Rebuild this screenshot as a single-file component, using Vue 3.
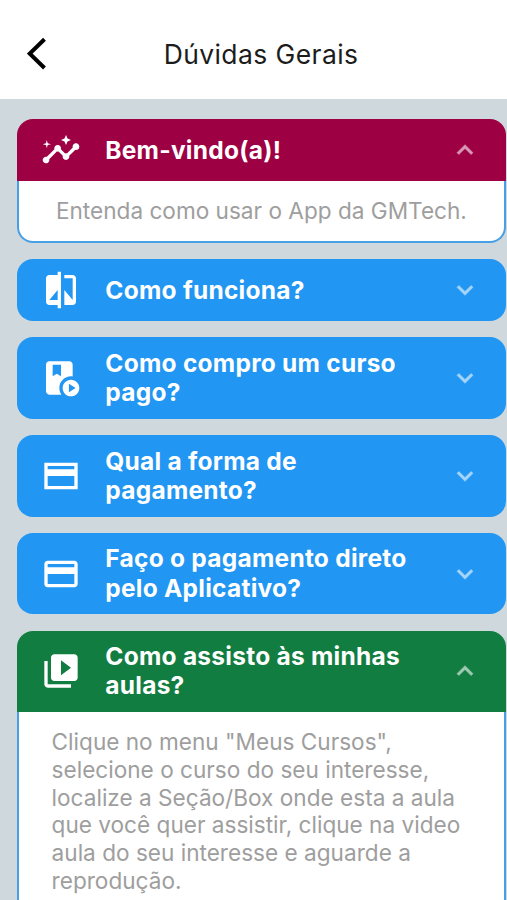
<script setup>
import { ref } from 'vue'

const icons = {
  insights:
    'M21 8c-1.45 0-2.26 1.44-1.93 2.51l-3.55 3.56c-.3-.09-.74-.09-1.04 0l-2.55-2.55C12.27 10.45 11.46 9 10 9c-1.45 0-2.27 1.44-1.93 2.52l-4.56 4.55C2.44 15.74 1 16.55 1 18c0 1.1.9 2 2 2 1.45 0 2.26-1.44 1.93-2.51l4.55-4.56c.3.09.74.09 1.04 0l2.55 2.55C12.73 16.55 13.54 18 15 18c1.45 0 2.27-1.44 1.93-2.52l3.56-3.55C21.56 12.26 23 11.45 23 10c0-1.1-.9-2-2-2zM15 9l.94-2.07L18 6l-2.06-.93L15 3l-.92 2.07L12 6l2.08.93zM3.5 11L4 9l2-.5L4 8l-.5-2L3 8l-2 .5L3 9z',
  compare:
    'M10 3H5c-1.1 0-2 .9-2 2v14c0 1.1.9 2 2 2h5v2h2V1h-2v2zm0 15H5l5-6v6zm9-15h-5v2h5v13l-5-6v9h5c1.1 0 2-.9 2-2V5c0-1.1-.9-2-2-2z',
  lesson:
    'M18 11c.34 0 .67.03 1 .08V4c0-1.1-.9-2-2-2H5c-1.1 0-2 .9-2 2v16c0 1.1.9 2 2 2h7.26C11.47 20.87 11 19.49 11 18c0-3.87 3.13-7 7-7zM7 11V4h5v7L9.5 9.5 7 11zM18 13c-2.76 0-5 2.24-5 5s2.24 5 5 5 5-2.24 5-5-2.24-5-5-5zm-1.25 7.5v-5l4 2.5-4 2.5z',
  cardSharp: 'M22 4H2v16h20V4zm-2 14H4v-6h16v6zm0-10H4V6h16v2z',
  card: 'M20 4H4c-1.11 0-1.99.89-1.99 2L2 18c0 1.11.89 2 2 2h16c1.11 0 2-.89 2-2V6c0-1.11-.89-2-2-2zm0 14H4v-6h16v6zm0-10H4V6h16v2z',
  videos:
    'M4 6H2v14c0 1.1.9 2 2 2h14v-2H4V6zm16-4H8c-1.1 0-2 .9-2 2v12c0 1.1.9 2 2 2h12c1.1 0 2-.9 2-2V4c0-1.1-.9-2-2-2zm-8 12.5v-9l6 4.5-6 4.5z',
}

const items = ref([
  { icon: 'insights', lines: ['Bem-vindo(a)!'], tone: 'crimson', open: true, note: true, body: ['Entenda como usar o App da GMTech.'] },
  { icon: 'compare', lines: ['Como funciona?'], tone: 'blue' },
  { icon: 'lesson', lines: ['Como compro um curso', 'pago?'], tone: 'blue' },
  { icon: 'cardSharp', lines: ['Qual a forma de', 'pagamento?'], tone: 'blue' },
  { icon: 'card', lines: ['Faço o pagamento direto', 'pelo Aplicativo?'], tone: 'blue' },
  {
    icon: 'videos',
    lines: ['Como assisto às minhas', 'aulas?'],
    tone: 'green',
    open: true,
    body: [
      'Clique no menu "Meus Cursos",',
      'selecione o curso do seu interesse,',
      'localize a Seção/Box onde esta a aula',
      'que você quer assistir, clique na video',
      'aula do seu interesse e aguarde a',
      'reprodução.',
    ],
  },
])
</script>

<template>
  <div class="screen">
    <header class="bar">
      <svg class="back" viewBox="0 0 20 34"><path d="M17.5 2.2 2.8 16.6 17.5 31" /></svg>
      <h1 class="title">Dúvidas Gerais</h1>
    </header>
    <main class="list">
      <section v-for="item in items" :key="item.icon" class="panel">
        <button class="head" :class="[item.tone, { open: item.open, tall: item.lines.length > 1 }]">
          <svg class="icon" viewBox="0 0 24 24"><path :d="icons[item.icon]" /></svg>
          <span class="label"><span v-for="l in item.lines" :key="l" class="line">{{ l }}</span></span>
          <svg class="chevron" :class="{ up: item.open }" viewBox="0 0 24 24">
            <path d="M16.59 8.59 12 13.17 7.41 8.59 6 10l6 6 6-6z" />
          </svg>
        </button>
        <div v-if="item.open" class="body" :class="{ note: item.note }">
          <span v-for="l in item.body" :key="l" class="line">{{ l }}</span>
        </div>
      </section>
    </main>
  </div>
</template>

<style>
body {
  margin: 0;
  background: #cfd8dc;
}
</style>

<style scoped>
.screen {
  box-sizing: border-box;
  height: 900px;
  overflow: hidden;
  background: #cfd8dc;
  font-family: Inter, "Liberation Sans", sans-serif;
}
.bar {
  display: grid;
  grid-template-columns: 68px 1fr 53px;
  align-items: center;
  box-sizing: border-box;
  height: 99px;
  padding-top: 8px;
  background: #fff;
}
.back {
  width: 20px;
  height: 34px;
  margin-left: 26.5px;
  fill: none;
  stroke: #000;
  stroke-width: 4;
}
.title {
  margin: 0;
  text-align: center;
  font-size: 26.5px;
  font-weight: 400;
  letter-spacing: 0.4px;
  color: #1c1c1c;
  white-space: nowrap;
}
.list {
  display: flex;
  flex-direction: column;
  gap: 16.2px;
  padding: 20.4px 1.5px 0 17.3px;
}
.head {
  display: flex;
  align-items: center;
  box-sizing: border-box;
  width: 100%;
  height: 61.8px;
  padding: 0 24.5px 0 24px;
  border: 0;
  border-radius: 16px;
  font-family: inherit;
  text-align: left;
  color: #fff;
}
.head.tall {
  height: 81.6px;
}
.head.open {
  border-radius: 16px 16px 0 0;
}
.blue {
  background: #2196f3;
}
.crimson {
  background: #9e0044;
}
.green {
  background: #127d41;
}
.icon {
  flex: none;
  width: 40px;
  height: 40px;
  fill: #fff;
}
.label {
  flex: 1;
  margin-left: 24px;
  font-size: 24.5px;
  font-weight: 700;
  line-height: 29.3px;
  letter-spacing: 0.25px;
}
.line {
  display: block;
  white-space: nowrap;
}
.chevron {
  flex: none;
  width: 32px;
  height: 32px;
  fill: #fff;
  stroke: #fff;
  stroke-width: 0.4;
  opacity: 0.6;
}
.chevron.up {
  transform: rotate(180deg);
}
.body {
  box-sizing: border-box;
  padding: 16px 0 22px 32.3px;
  border: 2px solid #479fe6;
  border-top: 0;
  border-radius: 0 0 16px 16px;
  background: #fff;
  font-size: 22.6px;
  line-height: 27.7px;
  color: #9e9e9e;
}
.body.note {
  height: 61.9px;
  padding: 16px 0 0;
  text-align: center;
}
</style>
